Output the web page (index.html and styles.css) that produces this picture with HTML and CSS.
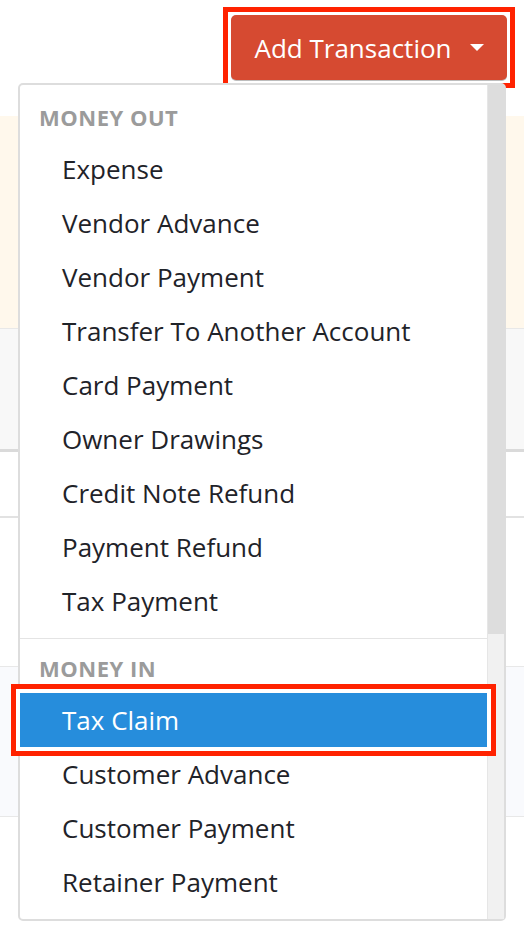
FILE: index.html
```html
<!DOCTYPE html>
<html lang="en">
<head>
    <meta charset="UTF-8">
    <meta name="viewport" content="width=device-width, initial-scale=1.0">
    <title>Add Transaction</title>
    <link rel="stylesheet" href="styles.css">
</head>
<body>
    <div class="toolbar">
        <div class="mark">
            <button class="add_btn">Add Transaction <span class="caret"></span></button>
        </div>
    </div>
    <div class="band band_cream"></div>
    <div class="band band_gray"></div>
    <div class="band band_white"></div>
    <div class="band band_white2"></div>
    <div class="band band_blue"></div>
    <div class="band band_rest"></div>

    <div class="dropdown">
        <div class="menu">
            <div class="group first">
                <div class="group_title">MONEY OUT</div>
                <div class="item">Expense</div>
                <div class="item">Vendor Advance</div>
                <div class="item">Vendor Payment</div>
                <div class="item">Transfer To Another Account</div>
                <div class="item">Card Payment</div>
                <div class="item">Owner Drawings</div>
                <div class="item">Credit Note Refund</div>
                <div class="item">Payment Refund</div>
                <div class="item">Tax Payment</div>
            </div>
            <div class="group">
                <div class="group_title">MONEY IN</div>
                <div class="item active">Tax Claim</div>
                <div class="item">Customer Advance</div>
                <div class="item">Customer Payment</div>
                <div class="item">Retainer Payment</div>
            </div>
        </div>
        <div class="scrollbar"><div class="thumb"></div></div>
    </div>
</body>
</html>
```
FILE: styles.css
```css
body {
    font-family: "Open Sans", Lato, Arial, sans-serif;
    margin: 0;
    padding: 0;
    background-color: white;
    color: #1f2329;
}

.toolbar {
    height: 116px;
    display: flex;
    justify-content: flex-end;
    align-items: flex-start;
    padding: 7px 9px 0 0;
    box-sizing: border-box;
}

/* red annotation frame round the button */
.mark {
    border: 5px solid #ff2200;
    padding: 3px;
}

.add_btn {
    display: flex;
    width: 276px;
    height: 65px;
    background-color: #d64a31;
    color: white;
    border: none;
    border-radius: 5px;
    box-shadow: 0 1px 0 #bdbdbd;
    font-family: inherit;
    font-size: 26px;
    align-items: center;
    justify-content: center;
    gap: 18px;
    padding: 0;
}

.caret {
    width: 0;
    height: 0;
    border-left: 7px solid transparent;
    border-right: 7px solid transparent;
    border-top: 7px solid white;
}

.band {
    border-bottom: 1px solid #e8e8e8;
}
.band_cream {
    height: 212px;
    background-color: #fff8ec;
}
.band_gray {
    height: 120px;
    background-color: #f8f8f8;
    border-bottom: 3px solid #dadada;
}
.band_white {
    height: 64px;
    border-bottom: 2px solid #e2e2e2;
}
.band_white2 {
    height: 148px;
}
.band_blue {
    height: 149px;
    background-color: #f9fafd;
}
.band_rest {
    height: 121px;
    border: none;
}

.dropdown {
    position: absolute;
    top: 83px;
    left: 18px;
    width: 488px;
    height: 838px;
    box-sizing: border-box;
    background-color: white;
    border: 2px solid #dddddd;
    border-radius: 5px;
    display: flex;
}

.menu {
    flex: 1;
}

.group {
    padding-bottom: 10px;
}
.group.first {
    padding-top: 3px;
}
.group + .group {
    border-top: 1px solid #e4e4e4;
}

.group_title {
    padding: 16px 0 12px 19px;
    line-height: 26px;
    font-size: 22px;
    letter-spacing: 0.5px;
    font-weight: bold;
    color: #9b9b9b;
}

.item {
    height: 54px;
    line-height: 54px;
    padding-left: 42px;
    font-size: 26px;
}

.item.active {
    position: relative;
    z-index: 1;
    background-color: #268ddc;
    color: white;
    outline: 5px solid #ff2200;
    outline-offset: 4px;
    box-shadow: 0 0 0 4px white;
}

.scrollbar {
    width: 16px;
    background-color: #f1f1f1;
    border-left: 1px solid #e6e6e6;
}

.thumb {
    height: 549px;
    background-color: #dddddd;
}
```
